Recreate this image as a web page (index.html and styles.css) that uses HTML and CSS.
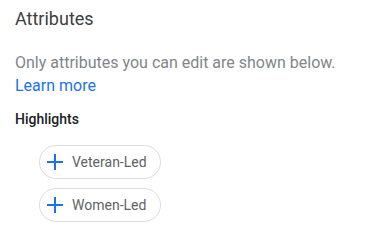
FILE: index.html
```html
<!DOCTYPE html>
<html lang="en">
<head>
    <meta charset="UTF-8">
    <title>Attributes</title>
    <link rel="stylesheet" href="styles.css">
</head>
<body>
    <div class="panel">
        <h2 class="title">Attributes</h2>
        <p class="intro">Only attributes you can edit are shown below.<br><a href="#" class="learn">Learn more</a></p>
        <h3 class="group">Highlights</h3>
        <div class="chips">
            <button class="chip">
                <svg class="plus" width="18" height="18" viewBox="0 0 18 18"><path d="M9 1v16M1 9h16" stroke="#1a73e8" stroke-width="2"/></svg>
                Veteran-Led
            </button>
            <button class="chip">
                <svg class="plus" width="18" height="18" viewBox="0 0 18 18"><path d="M9 1v16M1 9h16" stroke="#1a73e8" stroke-width="2"/></svg>
                Women-Led
            </button>
        </div>
    </div>
</body>
</html>
```
FILE: styles.css
```css
body {
    margin: 0;
    background-color: #ffffff;
    font-family: Roboto, Arial, sans-serif;
}
.panel {
    padding: 8px 15px;
}
.title {
    margin: 0;
    font-size: 18px;
    font-weight: 400;
    line-height: 22px;
    color: #3c4043;
}
.intro {
    margin: 21px 0 0 0;
    font-size: 16px;
    line-height: 23px;
    color: #80868b;
}
.learn {
    color: #1a73e8;
    text-decoration: none;
}
.group {
    margin: 12px 0 0 0;
    font-size: 14px;
    font-weight: 500;
    line-height: 20px;
    color: #202124;
}
.chips {
    display: flex;
    flex-direction: column;
    align-items: flex-start;
    gap: 9px;
    margin-top: 16px;
    padding-left: 24px;
}
.chip {
    display: flex;
    align-items: center;
    gap: 8px;
    width: 122px;
    height: 34px;
    padding: 0 12px 0 6px;
    background-color: #ffffff;
    border: 1px solid #dadce0;
    border-radius: 17px;
    font-family: Roboto, Arial, sans-serif;
    font-size: 14px;
    color: #5f6368;
}
```
